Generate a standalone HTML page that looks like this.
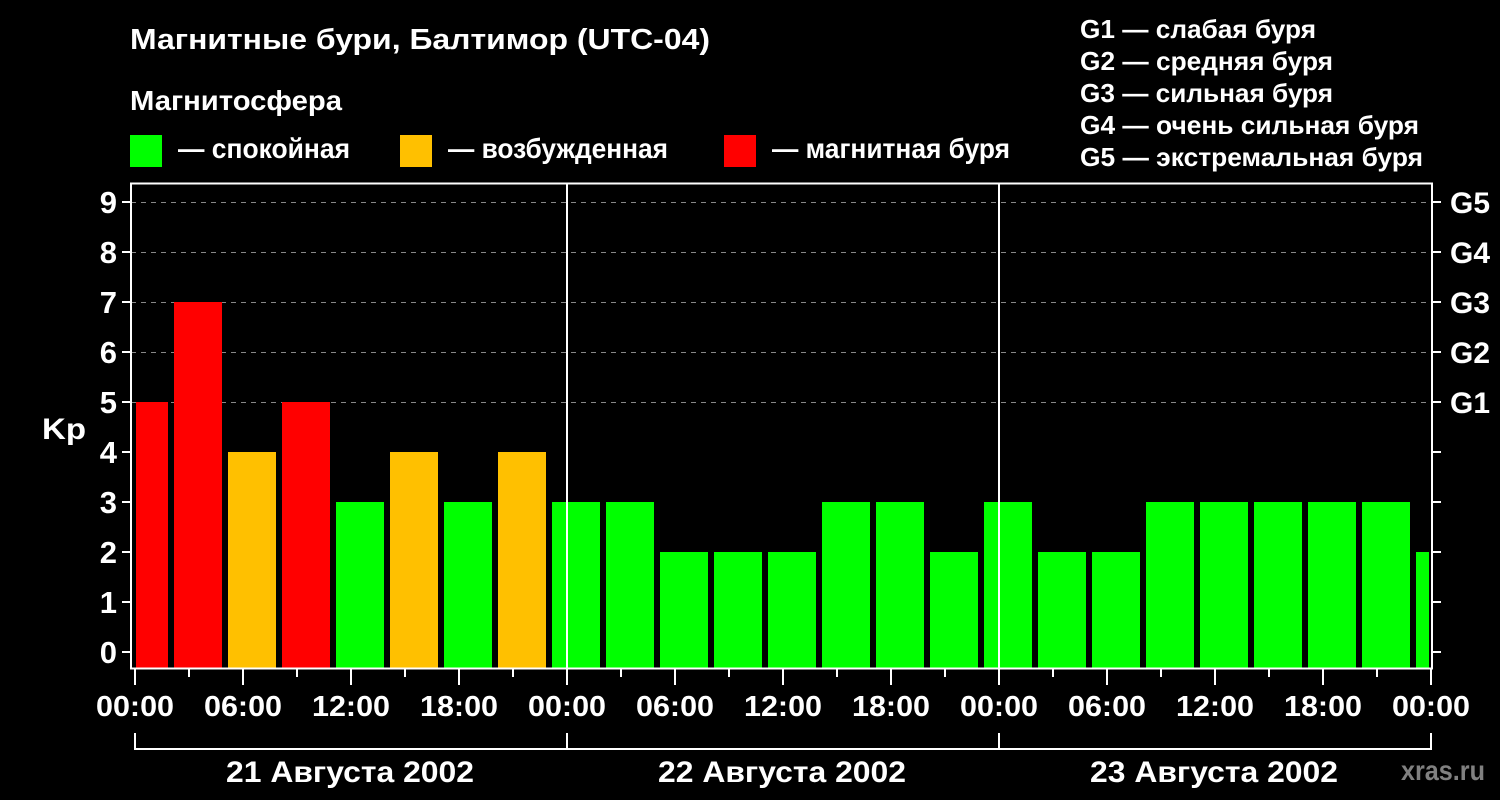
<!DOCTYPE html>
<html><head><meta charset="utf-8"><style>html,body{margin:0;padding:0;background:#000}svg{display:block}text{font-family:"Liberation Sans",sans-serif;font-weight:bold;fill:#fff}</style></head><body>
<svg width="1500" height="800" viewBox="0 0 1500 800" xmlns="http://www.w3.org/2000/svg">
<rect width="1500" height="800" fill="#000"/>
<text x="130" y="49" font-size="29" textLength="580" lengthAdjust="spacingAndGlyphs">Магнитные бури, Балтимор (UTC-04)</text>
<text x="130" y="110" font-size="28" textLength="212" lengthAdjust="spacingAndGlyphs">Магнитосфера</text>
<rect x="130" y="135" width="32" height="32" fill="#00ff00"/>
<text x="178" y="158" font-size="28" textLength="172" lengthAdjust="spacingAndGlyphs">— спокойная</text>
<rect x="400" y="135" width="32" height="32" fill="#ffc000"/>
<text x="448" y="158" font-size="28" textLength="220" lengthAdjust="spacingAndGlyphs">— возбужденная</text>
<rect x="724" y="135" width="32" height="32" fill="#ff0000"/>
<text x="772" y="158" font-size="28" textLength="238" lengthAdjust="spacingAndGlyphs">— магнитная буря</text>
<g font-size="26">
<text x="1080" y="38" textLength="236" lengthAdjust="spacingAndGlyphs">G1 — слабая буря</text>
<text x="1080" y="70" textLength="253" lengthAdjust="spacingAndGlyphs">G2 — средняя буря</text>
<text x="1080" y="102" textLength="253" lengthAdjust="spacingAndGlyphs">G3 — сильная буря</text>
<text x="1080" y="134" textLength="339" lengthAdjust="spacingAndGlyphs">G4 — очень сильная буря</text>
<text x="1080" y="166" textLength="343" lengthAdjust="spacingAndGlyphs">G5 — экстремальная буря</text>
</g>
<g stroke="#888" stroke-width="1" stroke-dasharray="5,5">
<line x1="131" y1="202.5" x2="1432" y2="202.5"/><line x1="131" y1="252.5" x2="1432" y2="252.5"/><line x1="131" y1="302.5" x2="1432" y2="302.5"/><line x1="131" y1="352.5" x2="1432" y2="352.5"/><line x1="131" y1="402.5" x2="1432" y2="402.5"/>
</g>
<svg x="136" y="183" width="1293" height="486" viewBox="136 183 1293 486" overflow="hidden">
<rect x="120" y="402" width="48" height="266" fill="#ff0000"/>
<rect x="174" y="302" width="48" height="366" fill="#ff0000"/>
<rect x="228" y="452" width="48" height="216" fill="#ffc000"/>
<rect x="282" y="402" width="48" height="266" fill="#ff0000"/>
<rect x="336" y="502" width="48" height="166" fill="#00ff00"/>
<rect x="390" y="452" width="48" height="216" fill="#ffc000"/>
<rect x="444" y="502" width="48" height="166" fill="#00ff00"/>
<rect x="498" y="452" width="48" height="216" fill="#ffc000"/>
<rect x="552" y="502" width="48" height="166" fill="#00ff00"/>
<rect x="606" y="502" width="48" height="166" fill="#00ff00"/>
<rect x="660" y="552" width="48" height="116" fill="#00ff00"/>
<rect x="714" y="552" width="48" height="116" fill="#00ff00"/>
<rect x="768" y="552" width="48" height="116" fill="#00ff00"/>
<rect x="822" y="502" width="48" height="166" fill="#00ff00"/>
<rect x="876" y="502" width="48" height="166" fill="#00ff00"/>
<rect x="930" y="552" width="48" height="116" fill="#00ff00"/>
<rect x="984" y="502" width="48" height="166" fill="#00ff00"/>
<rect x="1038" y="552" width="48" height="116" fill="#00ff00"/>
<rect x="1092" y="552" width="48" height="116" fill="#00ff00"/>
<rect x="1146" y="502" width="48" height="166" fill="#00ff00"/>
<rect x="1200" y="502" width="48" height="166" fill="#00ff00"/>
<rect x="1254" y="502" width="48" height="166" fill="#00ff00"/>
<rect x="1308" y="502" width="48" height="166" fill="#00ff00"/>
<rect x="1362" y="502" width="48" height="166" fill="#00ff00"/>
<rect x="1416" y="552" width="48" height="116" fill="#00ff00"/>
</svg>
<g stroke="#fff" stroke-width="2" fill="none">
<rect x="131" y="183.5" width="1301" height="485"/>
<line x1="567" y1="183" x2="567" y2="669"/><line x1="999" y1="183" x2="999" y2="669"/>
</g>
<g stroke="#fff" stroke-width="2">
<line x1="122" y1="202" x2="131" y2="202"/><line x1="122" y1="252" x2="131" y2="252"/><line x1="122" y1="302" x2="131" y2="302"/><line x1="122" y1="352" x2="131" y2="352"/><line x1="122" y1="402" x2="131" y2="402"/><line x1="122" y1="452" x2="131" y2="452"/><line x1="122" y1="502" x2="131" y2="502"/><line x1="122" y1="552" x2="131" y2="552"/><line x1="122" y1="602" x2="131" y2="602"/><line x1="122" y1="652" x2="131" y2="652"/>
<line x1="1432" y1="202" x2="1441" y2="202"/><line x1="1432" y1="252" x2="1441" y2="252"/><line x1="1432" y1="302" x2="1441" y2="302"/><line x1="1432" y1="352" x2="1441" y2="352"/><line x1="1432" y1="402" x2="1441" y2="402"/><line x1="1432" y1="452" x2="1441" y2="452"/><line x1="1432" y1="502" x2="1441" y2="502"/><line x1="1432" y1="552" x2="1441" y2="552"/><line x1="1432" y1="602" x2="1441" y2="602"/><line x1="1432" y1="652" x2="1441" y2="652"/>
</g>
<g font-size="31" text-anchor="end">
<text x="117" y="213">9</text><text x="117" y="263">8</text><text x="117" y="313">7</text><text x="117" y="363">6</text><text x="117" y="413">5</text><text x="117" y="463">4</text><text x="117" y="513">3</text><text x="117" y="563">2</text><text x="117" y="613">1</text><text x="117" y="663">0</text>
</g>
<text x="42" y="439" font-size="30" textLength="44" lengthAdjust="spacingAndGlyphs">Kp</text>
<g font-size="30">
<text x="1450" y="213" textLength="40" lengthAdjust="spacingAndGlyphs">G5</text><text x="1450" y="263" textLength="40" lengthAdjust="spacingAndGlyphs">G4</text><text x="1450" y="313" textLength="40" lengthAdjust="spacingAndGlyphs">G3</text><text x="1450" y="363" textLength="40" lengthAdjust="spacingAndGlyphs">G2</text><text x="1450" y="413" textLength="40" lengthAdjust="spacingAndGlyphs">G1</text>
</g>
<g stroke="#fff" stroke-width="2">
<line x1="135" y1="669" x2="135" y2="685"/><line x1="189" y1="669" x2="189" y2="677"/><line x1="243" y1="669" x2="243" y2="685"/><line x1="297" y1="669" x2="297" y2="677"/><line x1="351" y1="669" x2="351" y2="685"/><line x1="405" y1="669" x2="405" y2="677"/><line x1="459" y1="669" x2="459" y2="685"/><line x1="513" y1="669" x2="513" y2="677"/>
<line x1="567" y1="669" x2="567" y2="685"/><line x1="621" y1="669" x2="621" y2="677"/><line x1="675" y1="669" x2="675" y2="685"/><line x1="729" y1="669" x2="729" y2="677"/><line x1="783" y1="669" x2="783" y2="685"/><line x1="837" y1="669" x2="837" y2="677"/><line x1="891" y1="669" x2="891" y2="685"/><line x1="945" y1="669" x2="945" y2="677"/>
<line x1="999" y1="669" x2="999" y2="685"/><line x1="1053" y1="669" x2="1053" y2="677"/><line x1="1107" y1="669" x2="1107" y2="685"/><line x1="1161" y1="669" x2="1161" y2="677"/><line x1="1215" y1="669" x2="1215" y2="685"/><line x1="1269" y1="669" x2="1269" y2="677"/><line x1="1323" y1="669" x2="1323" y2="685"/><line x1="1377" y1="669" x2="1377" y2="677"/><line x1="1431" y1="669" x2="1431" y2="685"/>
</g>
<g font-size="29">
<text x="96" y="716" textLength="78" lengthAdjust="spacingAndGlyphs">00:00</text><text x="204" y="716" textLength="78" lengthAdjust="spacingAndGlyphs">06:00</text><text x="312" y="716" textLength="78" lengthAdjust="spacingAndGlyphs">12:00</text><text x="420" y="716" textLength="78" lengthAdjust="spacingAndGlyphs">18:00</text>
<text x="528" y="716" textLength="78" lengthAdjust="spacingAndGlyphs">00:00</text><text x="636" y="716" textLength="78" lengthAdjust="spacingAndGlyphs">06:00</text><text x="744" y="716" textLength="78" lengthAdjust="spacingAndGlyphs">12:00</text><text x="852" y="716" textLength="78" lengthAdjust="spacingAndGlyphs">18:00</text>
<text x="960" y="716" textLength="78" lengthAdjust="spacingAndGlyphs">00:00</text><text x="1068" y="716" textLength="78" lengthAdjust="spacingAndGlyphs">06:00</text><text x="1176" y="716" textLength="78" lengthAdjust="spacingAndGlyphs">12:00</text><text x="1284" y="716" textLength="78" lengthAdjust="spacingAndGlyphs">18:00</text><text x="1392" y="716" textLength="78" lengthAdjust="spacingAndGlyphs">00:00</text>
</g>
<g stroke="#fff" stroke-width="2" fill="none">
<polyline points="135,733 135,749 1431,749 1431,733"/>
<line x1="567" y1="733" x2="567" y2="749"/><line x1="999" y1="733" x2="999" y2="749"/>
</g>
<g font-size="30">
<text x="226" y="782" textLength="248" lengthAdjust="spacingAndGlyphs">21 Августа 2002</text><text x="658" y="782" textLength="248" lengthAdjust="spacingAndGlyphs">22 Августа 2002</text><text x="1090" y="782" textLength="248" lengthAdjust="spacingAndGlyphs">23 Августа 2002</text>
</g>
<text x="1401" y="780" font-size="28" style="fill:#808080" textLength="84" lengthAdjust="spacingAndGlyphs">xras.ru</text>
</svg>
</body></html>
